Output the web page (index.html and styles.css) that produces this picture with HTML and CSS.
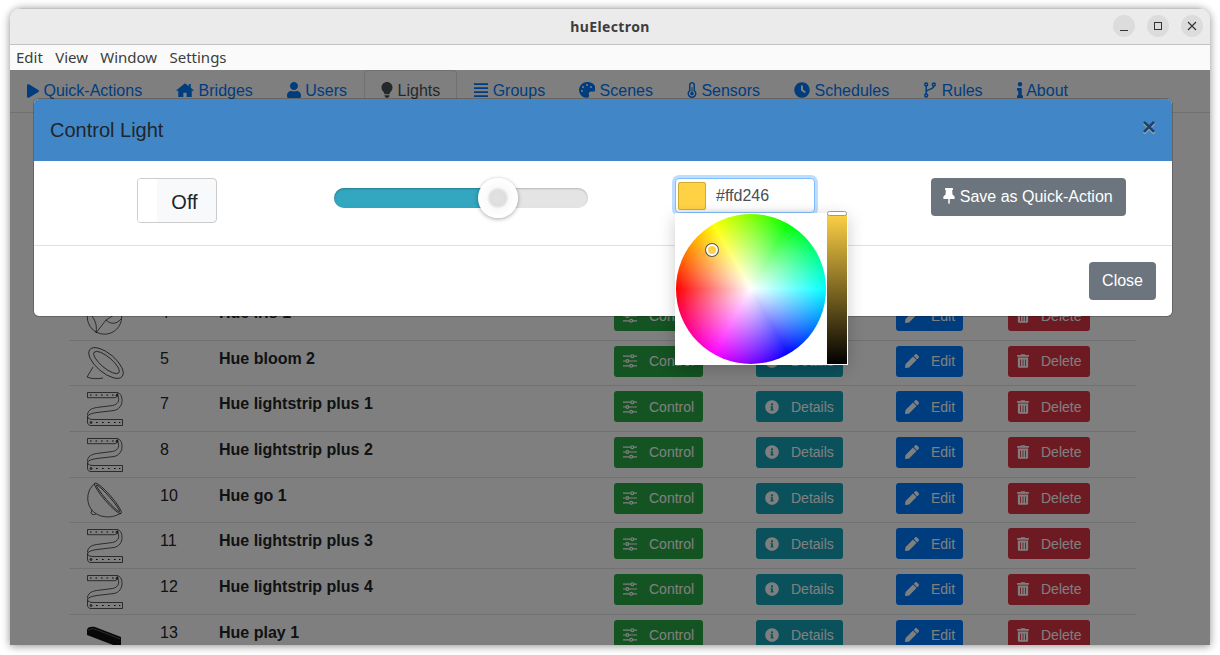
FILE: index.html
```html
<!DOCTYPE html>
<html lang="en">
<head>
    <meta charset="UTF-8">
    <title>huElectron</title>
    <link rel="stylesheet" href="styles.css">
</head>
<body>
    <svg class="sprites" xmlns="http://www.w3.org/2000/svg">
        <symbol id="i-play" viewBox="0 0 448 512"><path d="M424.4 214.7L72.4 6.6C43.8-10.3 0 6.1 0 47.9V464c0 37.5 40.7 60.1 72.4 41.3l352-208c31.4-18.5 31.5-64.1 0-82.6z"/></symbol>
        <symbol id="i-home" viewBox="0 0 576 512"><path d="M288 40L8 262l26 32 38-30v216h164V340h104v140h164V264l38 30 26-32-96-76V64h-64v72z"/></symbol>
        <symbol id="i-user" viewBox="0 0 448 512"><path d="M224 256c70.7 0 128-57.3 128-128S294.7 0 224 0 96 57.3 96 128s57.3 128 128 128zm89.6 32h-16.7c-22.2 10.2-46.9 16-72.9 16s-50.6-5.8-72.9-16h-16.7C60.2 288 0 348.2 0 422.4V464c0 26.5 21.5 48 48 48h352c26.5 0 48-21.5 48-48v-41.6c0-74.2-60.2-134.4-134.4-134.4z"/></symbol>
        <symbol id="i-bulb" viewBox="0 0 352 512"><path d="M176 0C79 0 0 79 0 176c0 46 17 86 45 118 18 20 46 63 56 96h150c10-33 38-76 56-96 28-32 45-72 45-118C352 79 273 0 176 0zM96 424h160v24l-16 24-24 24c-10 10-26 16-40 16s-30-6-40-16l-24-24-16-24z"/></symbol>
        <symbol id="i-list" viewBox="0 0 448 512"><path d="M0 40h448v56H0zM0 168h448v56H0zM0 296h448v56H0zM0 424h448v56H0z"/></symbol>
        <symbol id="i-palette" viewBox="0 0 512 512"><path fill-rule="evenodd" d="M204 5C104 25 25 104 6 204c-35 184 133 322 267 301 43-7 65-58 45-97-24-48 11-104 65-104h84c38 0 69-31 69-69C535 70 375-28 204 5zM96 320a32 32 0 1 1 0-64 32 32 0 0 1 0 64zM128 192a32 32 0 1 1 0-64 32 32 0 0 1 0 64zM256 128a32 32 0 1 1 0-64 32 32 0 0 1 0 64zM384 192a32 32 0 1 1 0-64 32 32 0 0 1 0 64z"/></symbol>
        <symbol id="i-thermo" viewBox="0 0 320 512"><path fill-rule="evenodd" d="M160 0c-53 0-96 43-96 96v167C35 292 16 330 16 368c0 80 64 144 144 144s144-64 144-144c0-38-19-76-48-105V96c0-53-43-96-96-96zM112 96c0-27 21-48 48-48s48 21 48 48v188c28 16 48 48 48 84 0 53-43 96-96 96s-96-43-96-96c0-36 20-68 48-84zM144 160h32v158c25 7 42 27 42 50 0 32-26 58-58 58s-58-26-58-58c0-23 17-43 42-50z"/></symbol>
        <symbol id="i-clock" viewBox="0 0 512 512"><path fill-rule="evenodd" d="M256 8C119 8 8 119 8 256s111 248 248 248 248-111 248-248S393 8 256 8zM224 112h64v130l92 67-37 52-119-87z"/></symbol>
        <symbol id="i-branch" viewBox="0 0 384 512"><g fill="none" stroke="currentColor" stroke-width="48"><circle cx="70" cy="80" r="46"/><circle cx="70" cy="432" r="46"/><circle cx="314" cy="80" r="46"/><path d="M70 126v260M314 126c0 130-244 90-244 200"/></g></symbol>
        <symbol id="i-info" viewBox="0 0 192 512"><path d="M20 424h20V280H20c-11 0-20-9-20-20v-48c0-11 9-20 20-20h112c11 0 20 9 20 20v212h20c11 0 20 9 20 20v48c0 11-9 20-20 20H20c-11 0-20-9-20-20v-48c0-11 9-20 20-20zM96 0a72 72 0 1 1 0 144 72 72 0 0 1 0-144z"/></symbol>
        <symbol id="i-sliders" viewBox="0 0 512 512"><g fill="none" stroke="currentColor" stroke-width="44"><path d="M0 80h280M400 80h112M0 256h100M220 256h292M0 432h240M360 432h152"/><circle cx="340" cy="80" r="52"/><circle cx="160" cy="256" r="52"/><circle cx="300" cy="432" r="52"/></g></symbol>
        <symbol id="i-circle-info" viewBox="0 0 512 512"><path d="M256 8C119 8 8 119.1 8 256c0 137 111 248 248 248s248-111 248-248C504 119.1 393 8 256 8zm0 110c23.2 0 42 18.8 42 42s-18.8 42-42 42-42-18.8-42-42 18.8-42 42-42zm56 254c0 6.6-5.4 12-12 12h-88c-6.6 0-12-5.4-12-12v-24c0-6.6 5.4-12 12-12h12v-64h-12c-6.6 0-12-5.4-12-12v-24c0-6.6 5.4-12 12-12h64c6.6 0 12 5.4 12 12v100h12c6.6 0 12 5.4 12 12v24z"/></symbol>
        <symbol id="i-pencil" viewBox="0 0 512 512"><path d="M497.9 142.1l-46.1 46.1c-4.7 4.7-12.3 4.7-17 0l-111-111c-4.7-4.7-4.7-12.3 0-17l46.1-46.1c18.7-18.7 49.1-18.7 67.9 0l60.1 60.1c18.8 18.7 18.8 49.1 0 67.9zM284.2 99.8L21.6 362.4.4 483.9c-2.9 16.4 11.4 30.6 27.8 27.8l121.5-21.3 262.6-262.6c4.7-4.7 4.7-12.3 0-17l-111-111c-4.8-4.7-12.4-4.7-17.1 0z"/></symbol>
        <symbol id="i-trash" viewBox="0 0 448 512"><path d="M32 464a48 48 0 0 0 48 48h288a48 48 0 0 0 48-48V128H32zm272-256a16 16 0 0 1 32 0v224a16 16 0 0 1-32 0zm-96 0a16 16 0 0 1 32 0v224a16 16 0 0 1-32 0zm-96 0a16 16 0 0 1 32 0v224a16 16 0 0 1-32 0zM432 32H312l-9.400-18.700A24 24 0 0 0 281.100 0H166.800a23.720 23.720 0 0 0-21.400 13.300L136 32H16A16 16 0 0 0 0 48v32a16 16 0 0 0 16 16h416a16 16 0 0 0 16-16V48a16 16 0 0 0-16-16z"/></symbol>
        <symbol id="i-pin" viewBox="0 0 384 512"><path d="M88 0h208c13 0 24 11 24 24v24c0 13-11 24-24 24h-4l12 144c40 20 72 52 72 96v16c0 13-11 24-24 24H216v136l-24 24-24-24V352H32c-13 0-24-11-24-24v-16c0-44 32-76 72-96L92 72h-4c-13 0-24-11-24-24V24C64 11 75 0 88 0z"/></symbol>

        <symbol id="lamp-iris" viewBox="0 0 40 40"><g fill="none" stroke="currentColor" stroke-width=".7"><circle cx="20.500" cy="19" r="17.200"/><path d="M8 18c4 6 5 10 4 17M22 22L12 35M22 22c4 4 10 5 15-1M22 22l8-5"/></g></symbol>
        <symbol id="lamp-bloom" viewBox="0 0 40 40"><g fill="none" stroke="currentColor" stroke-width=".7"><ellipse cx="22" cy="19" rx="21" ry="9.500" transform="rotate(40 22 19)"/><ellipse cx="22.500" cy="18.500" rx="16" ry="5.500" transform="rotate(40 22.500 18.500)"/><path d="M9 23L3 33c4 2 11 2 16 1"/></g></symbol>
        <symbol id="lamp-strip" viewBox="0 0 40 40"><g fill="none" stroke="currentColor" stroke-width=".7"><path d="M3.500 3.500H32c4 0 6 3 6 8 0 5-3 9-8 10l-17 2c-6 1-9.500 2-9.500 5V33c0 2.500 1.500 3.500 3.500 3.500h31.500v-6H9c-3 0-5.500-1-5.500-3"/><path d="M3.500 3.500v5.200H30c3 0 4.500-2 3.500-5M34 7c2 5-.5 8.500-5.500 9.500l-16 2c-5.500 1-9 3-9 8"/><g stroke-width="1"><path d="M6 6h1.600M11.500 6h1.600M17 6h1.600M22.500 6h1.600M28 6h1.600"/><circle cx="33" cy="6.300" r=".9"/><circle cx="7" cy="33.500" r=".9"/><path d="M12 33.500h1.600M18 33.500h1.600M24 33.500h1.600M30 33.500h1.600M35 33.500h1.300"/></g></g></symbol>
        <symbol id="lamp-go" viewBox="0 0 40 40"><g fill="none" stroke="currentColor" stroke-width=".7"><ellipse cx="24" cy="17.300" rx="20" ry="3.500" transform="rotate(49 24 17.300)"/><ellipse cx="24" cy="17.300" rx="17.500" ry="2" transform="rotate(49 24 17.300)"/><path d="M11 2.500C3 8 1.500 20 7 28c6 8 19 11 30 4M8 29l-1 3c1 2 3 2 5 1"/></g></symbol>
        <symbol id="lamp-play" viewBox="0 0 40 40"><path d="M3 12c0-3 4-4 8-3l26 10v11L3 17z"/><path d="M4 12.500c2-2 5-2 8-1l24 9.500" fill="none" stroke="#888" stroke-width=".6"/></symbol>
    </svg>

    <div class="window">
        <header class="titlebar">
            <span class="title">huElectron</span>
            <div class="win-buttons">
                <span class="win-btn"><svg width="12" height="12" viewBox="0 0 12 12"><path d="M2 10.500h8" stroke="currentColor"/></svg></span>
                <span class="win-btn"><svg width="12" height="12" viewBox="0 0 12 12"><rect x="2.500" y="2.500" width="7" height="7" fill="none" stroke="currentColor"/></svg></span>
                <span class="win-btn"><svg width="12" height="12" viewBox="0 0 12 12"><path d="M2 2l8 8M10 2l-8 8" stroke="currentColor" stroke-width="1.200"/></svg></span>
            </div>
        </header>
        <nav class="menubar">
            <span>Edit</span>
            <span>View</span>
            <span>Window</span>
            <span>Settings</span>
        </nav>

        <main class="app">
            <ul class="tabs">
                <li class="tab"><svg width="12" height="14"><use href="#i-play"/></svg> Quick-Actions</li>
                <li class="tab"><svg width="18" height="16"><use href="#i-home"/></svg> Bridges</li>
                <li class="tab"><svg width="14" height="16"><use href="#i-user"/></svg> Users</li>
                <li class="tab active"><svg width="12" height="16"><use href="#i-bulb"/></svg> Lights</li>
                <li class="tab"><svg width="14" height="16"><use href="#i-list"/></svg> Groups</li>
                <li class="tab"><svg width="16" height="16"><use href="#i-palette"/></svg> Scenes</li>
                <li class="tab"><svg width="10" height="16"><use href="#i-thermo"/></svg> Sensors</li>
                <li class="tab"><svg width="16" height="16"><use href="#i-clock"/></svg> Schedules</li>
                <li class="tab"><svg width="14" height="16"><use href="#i-branch"/></svg> Rules</li>
                <li class="tab"><svg width="6" height="16"><use href="#i-info"/></svg> About</li>
            </ul>

            <table class="lights">
                <colgroup>
                    <col class="c-img"><col class="c-id"><col class="c-name"><col class="c-control"><col class="c-details"><col class="c-edit"><col class="c-delete">
                </colgroup>
                <tbody>
                    <tr>
                        <td class="lamp-cell"><svg class="lamp"><use href="#lamp-iris"/></svg></td>
                        <td>4</td><td class="name">Hue iris 1</td>
                        <td><a class="btn green"><svg width="14" height="14"><use href="#i-sliders"/></svg>Control</a></td>
                        <td><a class="btn teal"><svg width="14" height="14"><use href="#i-circle-info"/></svg>Details</a></td>
                        <td><a class="btn blue"><svg width="14" height="14"><use href="#i-pencil"/></svg>Edit</a></td>
                        <td><a class="btn red"><svg width="12" height="14"><use href="#i-trash"/></svg>Delete</a></td>
                    </tr>
                    <tr>
                        <td class="lamp-cell"><svg class="lamp"><use href="#lamp-bloom"/></svg></td>
                        <td>5</td><td class="name">Hue bloom 2</td>
                        <td><a class="btn green"><svg width="14" height="14"><use href="#i-sliders"/></svg>Control</a></td>
                        <td><a class="btn teal"><svg width="14" height="14"><use href="#i-circle-info"/></svg>Details</a></td>
                        <td><a class="btn blue"><svg width="14" height="14"><use href="#i-pencil"/></svg>Edit</a></td>
                        <td><a class="btn red"><svg width="12" height="14"><use href="#i-trash"/></svg>Delete</a></td>
                    </tr>
                    <tr>
                        <td class="lamp-cell"><svg class="lamp"><use href="#lamp-strip"/></svg></td>
                        <td>7</td><td class="name">Hue lightstrip plus 1</td>
                        <td><a class="btn green"><svg width="14" height="14"><use href="#i-sliders"/></svg>Control</a></td>
                        <td><a class="btn teal"><svg width="14" height="14"><use href="#i-circle-info"/></svg>Details</a></td>
                        <td><a class="btn blue"><svg width="14" height="14"><use href="#i-pencil"/></svg>Edit</a></td>
                        <td><a class="btn red"><svg width="12" height="14"><use href="#i-trash"/></svg>Delete</a></td>
                    </tr>
                    <tr>
                        <td class="lamp-cell"><svg class="lamp"><use href="#lamp-strip"/></svg></td>
                        <td>8</td><td class="name">Hue lightstrip plus 2</td>
                        <td><a class="btn green"><svg width="14" height="14"><use href="#i-sliders"/></svg>Control</a></td>
                        <td><a class="btn teal"><svg width="14" height="14"><use href="#i-circle-info"/></svg>Details</a></td>
                        <td><a class="btn blue"><svg width="14" height="14"><use href="#i-pencil"/></svg>Edit</a></td>
                        <td><a class="btn red"><svg width="12" height="14"><use href="#i-trash"/></svg>Delete</a></td>
                    </tr>
                    <tr>
                        <td class="lamp-cell"><svg class="lamp"><use href="#lamp-go"/></svg></td>
                        <td>10</td><td class="name">Hue go 1</td>
                        <td><a class="btn green"><svg width="14" height="14"><use href="#i-sliders"/></svg>Control</a></td>
                        <td><a class="btn teal"><svg width="14" height="14"><use href="#i-circle-info"/></svg>Details</a></td>
                        <td><a class="btn blue"><svg width="14" height="14"><use href="#i-pencil"/></svg>Edit</a></td>
                        <td><a class="btn red"><svg width="12" height="14"><use href="#i-trash"/></svg>Delete</a></td>
                    </tr>
                    <tr>
                        <td class="lamp-cell"><svg class="lamp"><use href="#lamp-strip"/></svg></td>
                        <td>11</td><td class="name">Hue lightstrip plus 3</td>
                        <td><a class="btn green"><svg width="14" height="14"><use href="#i-sliders"/></svg>Control</a></td>
                        <td><a class="btn teal"><svg width="14" height="14"><use href="#i-circle-info"/></svg>Details</a></td>
                        <td><a class="btn blue"><svg width="14" height="14"><use href="#i-pencil"/></svg>Edit</a></td>
                        <td><a class="btn red"><svg width="12" height="14"><use href="#i-trash"/></svg>Delete</a></td>
                    </tr>
                    <tr>
                        <td class="lamp-cell"><svg class="lamp"><use href="#lamp-strip"/></svg></td>
                        <td>12</td><td class="name">Hue lightstrip plus 4</td>
                        <td><a class="btn green"><svg width="14" height="14"><use href="#i-sliders"/></svg>Control</a></td>
                        <td><a class="btn teal"><svg width="14" height="14"><use href="#i-circle-info"/></svg>Details</a></td>
                        <td><a class="btn blue"><svg width="14" height="14"><use href="#i-pencil"/></svg>Edit</a></td>
                        <td><a class="btn red"><svg width="12" height="14"><use href="#i-trash"/></svg>Delete</a></td>
                    </tr>
                    <tr>
                        <td class="lamp-cell"><svg class="lamp"><use href="#lamp-play"/></svg></td>
                        <td>13</td><td class="name">Hue play 1</td>
                        <td><a class="btn green"><svg width="14" height="14"><use href="#i-sliders"/></svg>Control</a></td>
                        <td><a class="btn teal"><svg width="14" height="14"><use href="#i-circle-info"/></svg>Details</a></td>
                        <td><a class="btn blue"><svg width="14" height="14"><use href="#i-pencil"/></svg>Edit</a></td>
                        <td><a class="btn red"><svg width="12" height="14"><use href="#i-trash"/></svg>Delete</a></td>
                    </tr>
                </tbody>
            </table>

            <div class="backdrop">
                <section class="modal">
                    <div class="modal-header">
                        <h2>Control Light</h2>
                        <span class="close">&times;</span>
                    </div>
                    <div class="modal-body">
                        <div class="toggle"><span class="toggle-knob"></span><span class="toggle-label">Off</span></div>
                        <div class="slider">
                            <div class="slider-fill"></div>
                            <div class="slider-handle"></div>
                        </div>
                        <div class="picker">
                            <div class="picker-input">
                                <span class="swatch"></span>
                                <span class="hex">#ffd246</span>
                            </div>
                            <div class="picker-popup">
                                <div class="wheel"><span class="wheel-marker"></span></div>
                                <div class="value-bar"><span class="value-handle"></span></div>
                            </div>
                        </div>
                        <button class="save"><svg width="12" height="16"><use href="#i-pin"/></svg> Save as Quick-Action</button>
                    </div>
                    <div class="modal-footer">
                        <button class="close-btn">Close</button>
                    </div>
                </section>
            </div>
        </main>
    </div>
</body>
</html>
```

FILE: styles.css
```css
* {
    margin: 0;
    padding: 0;
    box-sizing: border-box;
}

body {
    height: 655px;
    overflow: hidden;
    background-color: #fff;
    font-family: "Liberation Sans", Arial, sans-serif;
    font-size: 16px;
    line-height: 24px;
    color: #212529;
}

svg {
    fill: currentColor;
    flex: none;
}

.sprites {
    display: none;
}

.window {
    display: flex;
    flex-direction: column;
    width: 1200px;
    height: 637px;
    margin: 8px 10px 0;
    overflow: hidden;
    border-radius: 12px 12px 0 0;
    box-shadow: 0 1px 8px rgba(0, 0, 0, 0.45);
}

/* title bar + menu */
.titlebar {
    position: relative;
    display: flex;
    align-items: center;
    justify-content: center;
    height: 37px;
    background-color: #ebebeb;
    border-top: 1px solid #c4c4c4;
    border-bottom: 1px solid #c2c2c2;
}

.title {
    font-family: "Noto Sans", sans-serif;
    font-size: 14px;
    font-weight: 700;
    letter-spacing: 0.4px;
    color: #3d3d3d;
}

.win-buttons {
    position: absolute;
    right: 7px;
    top: 6px;
    display: flex;
    gap: 12px;
}

.win-btn {
    display: flex;
    align-items: center;
    justify-content: center;
    width: 22px;
    height: 22px;
    border-radius: 50%;
    background-color: #dcdcdc;
    color: #333;
}

.menubar {
    display: flex;
    gap: 12.3px;
    align-items: center;
    height: 25px;
    padding: 0 0 1px 6px;
    background-color: #fafafa;
    font-family: "Noto Sans", sans-serif;
    font-size: 15px;
    color: #3d3d3d;
}

/* app */
.app {
    position: relative;
    flex: 1;
    overflow: hidden;
    background-color: #fff;
}

.tabs {
    display: flex;
    list-style: none;
    border-bottom: 1px solid #dee2e6;
}

.tab {
    padding: 8px 16px;
    border: 1px solid transparent;
    color: #007bff;
    white-space: nowrap;
}

.tab svg {
    vertical-align: -2px;
}

.tab.active {
    color: #495057;
    border-color: #dee2e6 #dee2e6 #fff;
    border-radius: 4px 4px 0 0;
}

.lights {
    width: 1067px;
    margin: 181px 0 0 59px;
    table-layout: fixed;
    border-collapse: collapse;
}

.c-img { width: 86px; }
.c-id { width: 59px; }
.c-name { width: 395px; }
.c-control { width: 142px; }
.c-details { width: 140px; }
.c-edit { width: 112px; }
.c-delete { width: 133px; }

.lights td {
    height: 45.67px;
    padding: 6px 5px 0;
    vertical-align: top;
    border-top: 1px solid #dee2e6;
}

.lights .lamp-cell {
    padding: 3px 5px 0;
}

.name {
    font-weight: 700;
}

.lamp {
    display: block;
    width: 40px;
    height: 40px;
    margin-left: 10px;
    color: #111;
}

.btn {
    display: flex;
    align-items: center;
    width: fit-content;
    gap: 12px;
    height: 31px;
    margin-top: -1px;
    padding: 0 9px;
    border-radius: 3px;
    font-size: 14px;
    color: #fff;
}

.green { background-color: #28a745; }
.teal { background-color: #17a2b8; }
.blue { background-color: #007bff; padding-right: 8px; }
.red { background-color: #dc3545; }

/* modal */
.backdrop {
    position: absolute;
    top: 0;
    left: 0;
    width: 100%;
    height: 100%;
    padding: 29px 38px 0 24px;
    background-color: rgba(0, 0, 0, 0.5);
}

.modal {
    background-color: #fff;
    border-radius: 5px;
    box-shadow: 0 0 0 1px rgba(0, 0, 0, 0.2);
}

.modal-header {
    display: flex;
    justify-content: space-between;
    height: 62px;
    padding: 16px;
    background-color: #4187c8;
    border-radius: 5px 5px 0 0;
}

.modal-header h2 {
    font-size: 20px;
    font-weight: 400;
    line-height: 30px;
}

.close {
    font-size: 24px;
    font-weight: 700;
    line-height: 24px;
    color: #000;
    opacity: 0.5;
    text-shadow: 0 1px 0 #fff;
}

.modal-body {
    display: grid;
    grid-template-columns: repeat(4, 1fr);
    justify-items: center;
    align-items: start;
    height: 84px;
    padding: 17px 1px 0;
}

.toggle {
    display: flex;
    width: 80px;
    height: 45px;
    overflow: hidden;
    background-color: #f8f9fa;
    border: 1px solid #ccc;
    border-radius: 4px;
}

.toggle-knob {
    width: 19px;
    background-color: #fff;
}

.toggle-label {
    flex: 1;
    font-size: 20px;
    line-height: 45px;
    padding: 1px 4px 0 0;
    text-align: center;
}

.slider {
    position: relative;
    width: 254px;
    height: 20px;
    margin-top: 10px;
    background-color: #e4e4e4;
    border-radius: 10px;
    box-shadow: inset 0 1px 2px rgba(0, 0, 0, 0.2);
}

.slider-fill {
    width: 164px;
    height: 20px;
    background-color: #33a6c0;
    border-radius: 10px 0 0 10px;
    box-shadow: inset 0 1px 2px rgba(0, 0, 0, 0.25);
}

.slider-handle {
    position: absolute;
    top: -10px;
    left: 144px;
    width: 40px;
    height: 40px;
    border-radius: 50%;
    background: radial-gradient(circle, #e2e2e2 0, #dedede 8px, #fafafa 11px, #fff 20px);
    box-shadow: 0 1px 4px rgba(0, 0, 0, 0.35);
}

.picker {
    position: relative;
    width: 140px;
}

.picker-input {
    display: flex;
    align-items: center;
    gap: 10px;
    height: 35px;
    padding-left: 2px;
    background-color: #fff;
    border: 1px solid #80bdff;
    border-radius: 4px;
    box-shadow: 0 0 0 3px rgba(0, 123, 255, 0.25), inset 0 -4px 4px -3px rgba(0, 0, 0, 0.1);
    color: #495057;
}

.swatch {
    width: 28px;
    height: 28px;
    background-color: #ffd246;
    border: 1px solid #d0a92f;
    border-radius: 2px;
}

.picker-popup {
    position: absolute;
    top: 35px;
    left: 0;
    display: flex;
    width: 173px;
    height: 152px;
    padding: 1px 0 0 1px;
    background-color: #fff;
    box-shadow: 0 4px 16px rgba(0, 0, 0, 0.2);
}

.wheel {
    position: relative;
    width: 150px;
    height: 150px;
    border-radius: 50%;
    background:
        radial-gradient(circle closest-side, #fff 0, rgba(255, 255, 255, 0) 100%),
        conic-gradient(from 270deg, #f00, #ff0, #0f0, #0ff, #00f, #f0f, #f00);
}

.wheel-marker {
    position: absolute;
    top: 30px;
    left: 30px;
    width: 12px;
    height: 12px;
    border-radius: 50%;
    background-color: #ffd246;
    border: 2px solid #fff;
    box-shadow: 0 0 0 1px #555;
}

.value-bar {
    position: relative;
    width: 20px;
    height: 151px;
    margin: -1px 0 0 1px;
    background: linear-gradient(#ffd246, #000);
}

.value-handle {
    position: absolute;
    top: -2px;
    left: 0;
    width: 20px;
    height: 5px;
    background-color: #fff;
    border: 1px solid #999;
    border-radius: 3px;
}

.save,
.close-btn {
    height: 38px;
    padding: 0 13px;
    background-color: #6c757d;
    border: none;
    border-radius: 4px;
    font-family: inherit;
    font-size: 16px;
    color: #fff;
}

.save {
    width: 195px;
    margin-right: 2px;
    padding: 0;
}

.save svg {
    vertical-align: -2px;
}

.modal-footer {
    display: flex;
    justify-content: flex-end;
    height: 71px;
    padding: 16px;
    border-top: 1px solid #dee2e6;
}
```
